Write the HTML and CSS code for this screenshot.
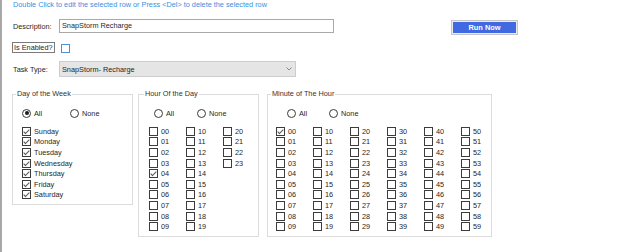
FILE: index.html
```html
<!DOCTYPE html>
<html>
<head>
<meta charset="utf-8">
<link rel="stylesheet" href="styles.css">
</head>
<body>
<div class="page">
  <div class="note">Double Click to edit the selected row or Press &lt;Del&gt; to delete the selected row</div>

  <div class="row row-desc">
    <span class="lbl">Description:</span>
    <div class="input">SnapStorm Recharge</div>
    <button class="run"><span class="run-in">Run Now</span></button>
  </div>

  <div class="row row-enabled">
    <span class="focus">Is Enabled?</span>
    <i class="cb cb-blue"></i>
  </div>

  <div class="row row-task">
    <span class="lbl">Task Type:</span>
    <div class="select">
      <span>SnapStorm- Recharge</span>
      <svg class="chev" width="6" height="4" viewBox="0 0 6 4"><polyline points="0.5,0.5 3,3 5.5,0.5" fill="none" stroke="#8a8a8a" stroke-width="1"/></svg>
    </div>
  </div>

  <div class="groups">
    <fieldset class="grp grp-day">
      <legend>Day of the Week</legend>
      <div class="radios">
        <label class="ropt"><i class="rb on"></i>All</label>
        <label class="ropt"><i class="rb"></i>None</label>
      </div>
      <div class="opts opts-day">
        <label class="opt"><i class="cb on"></i>Sunday</label>
        <label class="opt"><i class="cb on"></i>Monday</label>
        <label class="opt"><i class="cb on"></i>Tuesday</label>
        <label class="opt"><i class="cb on"></i>Wednesday</label>
        <label class="opt"><i class="cb on"></i>Thursday</label>
        <label class="opt"><i class="cb on"></i>Friday</label>
        <label class="opt"><i class="cb on"></i>Saturday</label>
      </div>
    </fieldset>

    <fieldset class="grp grp-hour">
      <legend>Hour Of the Day</legend>
      <div class="radios">
        <label class="ropt"><i class="rb"></i>All</label>
        <label class="ropt"><i class="rb"></i>None</label>
      </div>
      <div class="opts opts-grid">
        <label class="opt"><i class="cb"></i>00</label>
        <label class="opt"><i class="cb"></i>01</label>
        <label class="opt"><i class="cb"></i>02</label>
        <label class="opt"><i class="cb"></i>03</label>
        <label class="opt"><i class="cb on"></i>04</label>
        <label class="opt"><i class="cb"></i>05</label>
        <label class="opt"><i class="cb"></i>06</label>
        <label class="opt"><i class="cb"></i>07</label>
        <label class="opt"><i class="cb"></i>08</label>
        <label class="opt"><i class="cb"></i>09</label>
        <label class="opt"><i class="cb"></i>10</label>
        <label class="opt"><i class="cb"></i>11</label>
        <label class="opt"><i class="cb"></i>12</label>
        <label class="opt"><i class="cb"></i>13</label>
        <label class="opt"><i class="cb"></i>14</label>
        <label class="opt"><i class="cb"></i>15</label>
        <label class="opt"><i class="cb"></i>16</label>
        <label class="opt"><i class="cb"></i>17</label>
        <label class="opt"><i class="cb"></i>18</label>
        <label class="opt"><i class="cb"></i>19</label>
        <label class="opt"><i class="cb"></i>20</label>
        <label class="opt"><i class="cb"></i>21</label>
        <label class="opt"><i class="cb"></i>22</label>
        <label class="opt"><i class="cb"></i>23</label>
      </div>
    </fieldset>

    <fieldset class="grp grp-min">
      <legend>Minute of The Hour</legend>
      <div class="radios">
        <label class="ropt"><i class="rb"></i>All</label>
        <label class="ropt"><i class="rb"></i>None</label>
      </div>
      <div class="opts opts-grid">
        <label class="opt"><i class="cb on"></i>00</label>
        <label class="opt"><i class="cb"></i>01</label>
        <label class="opt"><i class="cb"></i>02</label>
        <label class="opt"><i class="cb"></i>03</label>
        <label class="opt"><i class="cb"></i>04</label>
        <label class="opt"><i class="cb"></i>05</label>
        <label class="opt"><i class="cb"></i>06</label>
        <label class="opt"><i class="cb"></i>07</label>
        <label class="opt"><i class="cb"></i>08</label>
        <label class="opt"><i class="cb"></i>09</label>
        <label class="opt"><i class="cb"></i>10</label>
        <label class="opt"><i class="cb"></i>11</label>
        <label class="opt"><i class="cb"></i>12</label>
        <label class="opt"><i class="cb"></i>13</label>
        <label class="opt"><i class="cb"></i>14</label>
        <label class="opt"><i class="cb"></i>15</label>
        <label class="opt"><i class="cb"></i>16</label>
        <label class="opt"><i class="cb"></i>17</label>
        <label class="opt"><i class="cb"></i>18</label>
        <label class="opt"><i class="cb"></i>19</label>
        <label class="opt"><i class="cb"></i>20</label>
        <label class="opt"><i class="cb"></i>21</label>
        <label class="opt"><i class="cb"></i>22</label>
        <label class="opt"><i class="cb"></i>23</label>
        <label class="opt"><i class="cb"></i>24</label>
        <label class="opt"><i class="cb"></i>25</label>
        <label class="opt"><i class="cb"></i>26</label>
        <label class="opt"><i class="cb"></i>27</label>
        <label class="opt"><i class="cb"></i>28</label>
        <label class="opt"><i class="cb"></i>29</label>
        <label class="opt"><i class="cb"></i>30</label>
        <label class="opt"><i class="cb"></i>31</label>
        <label class="opt"><i class="cb"></i>32</label>
        <label class="opt"><i class="cb"></i>33</label>
        <label class="opt"><i class="cb"></i>34</label>
        <label class="opt"><i class="cb"></i>35</label>
        <label class="opt"><i class="cb"></i>36</label>
        <label class="opt"><i class="cb"></i>37</label>
        <label class="opt"><i class="cb"></i>38</label>
        <label class="opt"><i class="cb"></i>39</label>
        <label class="opt"><i class="cb"></i>40</label>
        <label class="opt"><i class="cb"></i>41</label>
        <label class="opt"><i class="cb"></i>42</label>
        <label class="opt"><i class="cb"></i>43</label>
        <label class="opt"><i class="cb"></i>44</label>
        <label class="opt"><i class="cb"></i>45</label>
        <label class="opt"><i class="cb"></i>46</label>
        <label class="opt"><i class="cb"></i>47</label>
        <label class="opt"><i class="cb"></i>48</label>
        <label class="opt"><i class="cb"></i>49</label>
        <label class="opt"><i class="cb"></i>50</label>
        <label class="opt"><i class="cb"></i>51</label>
        <label class="opt"><i class="cb"></i>52</label>
        <label class="opt"><i class="cb"></i>53</label>
        <label class="opt"><i class="cb"></i>54</label>
        <label class="opt"><i class="cb"></i>55</label>
        <label class="opt"><i class="cb"></i>56</label>
        <label class="opt"><i class="cb"></i>57</label>
        <label class="opt"><i class="cb"></i>58</label>
        <label class="opt"><i class="cb"></i>59</label>
      </div>
    </fieldset>
  </div>
</div>
</body>
</html>
```

FILE: styles.css
```css
* { box-sizing: border-box; }
html, body { margin: 0; padding: 0; background: #fff; }
body {
  font-family: "Liberation Sans", Arial, sans-serif;
  font-size: 7.3px;
  color: #1f1f1f;
}
.page {
  border-left: 2px solid #a8a8a8;
  height: 252px;
  padding-left: 10px;
  overflow: hidden;
}
.note {
  color: #3a8fe3;
  line-height: 9px;
  height: 9px;
  padding-left: 1px;
}
.row { display: flex; align-items: center; }
.lbl { width: 47px; padding-left: 1px; flex: none; }

.row-desc { margin-top: 10px; height: 14px; }
.input {
  width: 275px;
  height: 14px;
  border: 1px solid #a9a9a9;
  padding-left: 2px;
  line-height: 12px;
  flex: none;
}
.run {
  margin: 2px 0 0 117px;
  width: 67px;
  height: 15px;
  border: 1px solid #c6c6c6;
  padding: 1px;
  background: #ececec;
  font: inherit;
  display: flex;
}
.run-in {
  flex: 1;
  background: #4169e1;
  color: #fff;
  font-weight: bold;
  font-size: 7.4px;
  line-height: 11px;
  text-align: center;
}

.row-enabled { margin-top: 9px; height: 11px; }
.focus {
  border: 1px solid #7a7a7a;
  padding: 0 1px;
  line-height: 9px;
  height: 11px;
}
.cb-blue { margin-left: 6px; margin-top: 1px; border-color: #4a8fd8 !important; }

.row-task { margin-top: 8px; height: 16px; }
.select {
  width: 237px;
  height: 16px;
  background: #e5e5e5;
  border: 1px solid #cdcdcd;
  padding: 0 3px 0 2px;
  display: flex;
  align-items: center;
  justify-content: space-between;
}
.chev { display: block; }

.groups { display: flex; align-items: flex-start; margin-top: 12px; }
.grp {
  margin: 0;
  padding: 0 0 4px 0;
  border: 1px solid #dcdcdc;
  min-width: 0;
  flex: none;
}
.grp legend {
  padding: 0 1px;
  line-height: 10px;
  color: #333;
}
.grp-day { width: 121px; padding-left: 9px; }
.grp-day legend { margin-left: -6px; }
.grp-hour { width: 121px; margin-left: 5px; padding-left: 10px; }
.grp-hour legend { margin-left: -5px; }
.grp-min { width: 225px; margin-left: 8px; padding-left: 8px; }
.grp-min legend { margin-left: -5px; }

.radios { display: flex; align-items: center; height: 10px; margin-top: 9px; }
.ropt { display: flex; align-items: center; gap: 3px; }
.grp-day .ropt:first-child { width: 48px; }
.grp-hour .radios { padding-left: 5px; }
.grp-hour .ropt:first-child { width: 43px; }
.grp-min .radios { padding-left: 11px; }
.grp-min .ropt:first-child { width: 42px; }

.rb {
  width: 9px; height: 9px;
  border: 1px solid #3a3a3a;
  border-radius: 50%;
  display: flex; align-items: center; justify-content: center;
  flex: none;
}
.rb.on::after {
  content: "";
  width: 4px; height: 4px;
  border-radius: 50%;
  background: #1a1a1a;
}

.opts { margin-top: 8px; }
.opts-day { display: grid; grid-template-rows: repeat(7, 10.6px); }
.opts-grid {
  display: grid;
  grid-template-rows: repeat(10, 10.6px);
  grid-auto-flow: column;
  grid-auto-columns: 37px;
}
.opt { display: flex; align-items: center; gap: 3px; white-space: nowrap; }

.cb {
  width: 9px; height: 9px;
  border: 1px solid #3c3c3c;
  background: #fff;
  display: flex; align-items: center; justify-content: center;
  flex: none;
}
.cb.on::after {
  content: "";
  width: 2px; height: 5px;
  border: solid #555;
  border-width: 0 1px 1px 0;
  transform: rotate(45deg);
  margin-top: -1px;
}
```
